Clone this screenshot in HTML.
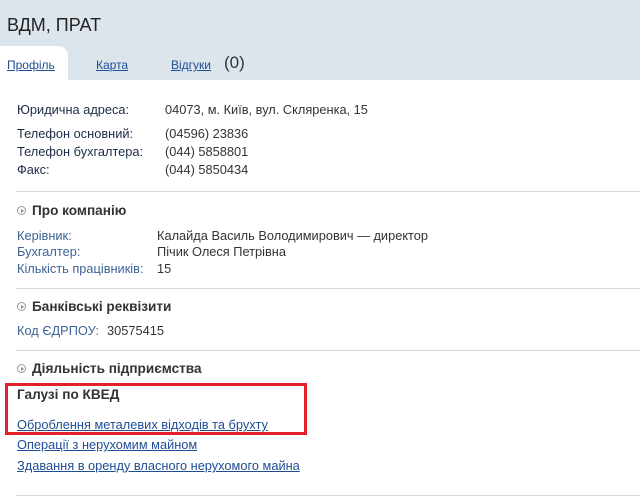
<!DOCTYPE html>
<html><head><meta charset="utf-8"><style>
*{margin:0;padding:0;box-sizing:border-box}
body{width:640px;height:500px;background:#fff;font-family:"Liberation Sans","DejaVu Sans",sans-serif;font-size:12.8px;color:#333;position:relative;overflow:hidden}
.a{position:absolute;white-space:nowrap}
.hdr{position:absolute;left:0;top:0;width:640px;height:80px;background:#dde5ec}
.tab{position:absolute;left:0;top:46px;width:68px;height:34px;background:#fff;border-radius:0 10px 0 0}
a{color:#1f4d94;text-decoration:underline}
.hr{position:absolute;left:16px;width:624px;height:1px;background:#d8d8d8}
.l1{color:#1c2b45}
.l2{color:#3d6497}
.h{font-weight:bold;font-size:13.6px;color:#333}
.ic{display:inline-block;width:9px;height:9px;border:1px solid #999;border-radius:50%;margin-right:6px;vertical-align:0px;position:relative}
.ic:after{content:"";position:absolute;left:3px;top:2px;border-left:3px solid #888;border-top:2px solid transparent;border-bottom:2px solid transparent}
</style></head><body>
<div class="hdr"></div><div class="tab"></div>
<div class="a" style="left:7px;top:15px;font-size:18px;color:#222">ВДМ, ПРАТ</div>
<div class="a" style="left:7px;top:58px;font-size:12px"><a>Профіль</a></div>
<div class="a" style="left:96px;top:58px;font-size:12px"><a>Карта</a></div>
<div class="a" style="left:171px;top:58px;font-size:12px"><a>Відгуки</a></div>
<div class="a" style="left:224px;top:53px;font-size:17px;color:#333">(0)</div>

<div class="a l1" style="left:17px;top:102px">Юридична адреса:</div><div class="a" style="left:165px;top:102px">04073, м. Київ, вул. Скляренка, 15</div>
<div class="a l1" style="left:17px;top:126px">Телефон основний:</div><div class="a" style="left:165px;top:126px">(04596) 23836</div>
<div class="a l1" style="left:17px;top:144px">Телефон бухгалтера:</div><div class="a" style="left:165px;top:144px">(044) 5858801</div>
<div class="a l1" style="left:17px;top:162px">Факс:</div><div class="a" style="left:165px;top:162px">(044) 5850434</div>

<div class="hr" style="top:191px"></div>
<div class="a h" style="left:17px;top:203px"><span class="ic"></span>Про компанію</div>
<div class="a l2" style="left:17px;top:228px">Керівник:</div><div class="a" style="left:157px;top:228px">Калайда Василь Володимирович — директор</div>
<div class="a l2" style="left:17px;top:244px">Бухгалтер:</div><div class="a" style="left:157px;top:244px">Пічик Олеся Петрівна</div>
<div class="a l2" style="left:17px;top:261px">Кількість працівників:</div><div class="a" style="left:157px;top:261px">15</div>

<div class="hr" style="top:288px"></div>
<div class="a h" style="left:17px;top:299px"><span class="ic"></span>Банківські реквізити</div>
<div class="a l2" style="left:17px;top:323px">Код ЄДРПОУ:</div><div class="a" style="left:107px;top:323px">30575415</div>

<div class="hr" style="top:350px"></div>
<div class="a h" style="left:17px;top:361px"><span class="ic"></span>Діяльність підприємства</div>
<div class="a" style="left:5px;top:383px;width:302px;height:52px;border:3px solid #e4202a"></div>
<div class="a h" style="left:17px;top:387px">Галузі по КВЕД</div>
<div class="a" style="left:17px;top:417px"><a>Оброблення металевих відходів та брухту</a></div>
<div class="a" style="left:17px;top:437px"><a>Операції з нерухомим майном</a></div>
<div class="a" style="left:17px;top:458px"><a>Здавання в оренду власного нерухомого майна</a></div>
<div class="hr" style="top:495px"></div>
</body></html>
